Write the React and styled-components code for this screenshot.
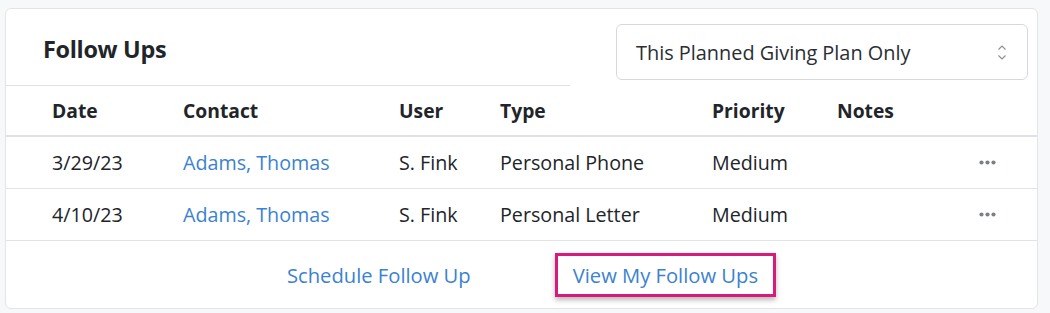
import React from "react";
import styled, { createGlobalStyle } from "styled-components";

const GlobalStyle = createGlobalStyle`
  html, body { margin: 0; padding: 0; }
  body {
    background: #f7f8fa;
    font-family: "Open Sans", "Noto Sans", sans-serif;
    color: #212529;
  }
`;

const Page = styled.div`
  padding: 8px 12px 0 5px;
`;

const Card = styled.div`
  background: #fff;
  border: 1px solid #e1e4e8;
  border-radius: 6px;
  height: 299px;
  overflow: hidden;
  display: flex;
  flex-direction: column;
`;

const TopRow = styled.div`
  display: flex;
  align-items: flex-start;
`;

const TitleCell = styled.div`
  flex: 0 0 564px;
  height: 77px;
  border-bottom: 1px solid #dee2e6;
  display: flex;
  align-items: center;
  padding-left: 37px;
  box-sizing: border-box;
`;

const Title = styled.h5`
  margin: 4px 0 0;
  font-size: 23.4px;
  font-weight: 700;
  letter-spacing: -0.3px;
`;

const SelectWrap = styled.div`
  flex: 1;
  padding: 15px 9px 0 46px;
`;

const SelectBox = styled.div`
  height: 56px;
  box-sizing: border-box;
  border: 1px solid #d5d9dd;
  border-radius: 6px;
  display: flex;
  align-items: center;
  justify-content: space-between;
  padding: 0 20px 0 19px;
  font-size: 19.9px;
  color: #2a2e33;
`;

const Table = styled.table`
  width: 100%;
  border-collapse: collapse;
  table-layout: fixed;
`;

const Th = styled.th`
  text-align: left;
  font-weight: 700;
  font-size: 19.3px;
  height: 49px;
  padding: 0 0 0 ${(p) => p.$pl || 10}px;
  border-bottom: 2px solid #dfe1e4;
  vertical-align: middle;
  line-height: 1;
`;

const Td = styled.td`
  font-size: 19.7px;
  height: 51px;
  padding: 0 0 0 ${(p) => p.$pl || 10}px;
  border-bottom: 1px solid #e1e3e6;
  vertical-align: middle;
  color: ${(p) => (p.$link ? "#3b82d0" : "#212529")};
  white-space: nowrap;
  line-height: 1;
`;

const DotsIcon = styled.svg`
  display: block;
  margin-top: -1px;
`;

const Footer = styled.div`
  flex: 1;
  display: flex;
  align-items: center;
  justify-content: center;
  gap: 66px;
  padding-left: 2px;
`;

const FooterLink = styled.a`
  font-size: 20.2px;
  color: #3b82d0;
  text-decoration: none;
  padding: 6px 15px;
  height: 44px;
  box-sizing: border-box;
  display: flex;
  align-items: center;
  border: ${(p) => (p.$highlight ? "3px solid #d81b7b" : "3px solid transparent")};
  box-shadow: ${(p) => (p.$highlight ? "0 3px 5px rgba(0,0,0,0.28)" : "none")};
`;

const Chevrons = () => (
  <svg width="10" height="17" viewBox="0 0 10 17" fill="none" stroke="#8a8f94" strokeWidth="1.1">
    <path d="M1.5 5.5 L5 2 L8.5 5.5" />
    <path d="M1.5 11.5 L5 15 L8.5 11.5" />
  </svg>
);

const Dots = () => (
  <DotsIcon width="17" height="5" viewBox="0 0 17 5" fill="#7b8085">
    <circle cx="2.5" cy="2.5" r="2.1" />
    <circle cx="8.5" cy="2.5" r="2.1" />
    <circle cx="14.5" cy="2.5" r="2.1" />
  </DotsIcon>
);

const rows = [
  { date: "3/29/23", contact: "Adams, Thomas", user: "S. Fink", type: "Personal Phone", priority: "Medium" },
  { date: "4/10/23", contact: "Adams, Thomas", user: "S. Fink", type: "Personal Letter", priority: "Medium" },
];

export default function App() {
  return (
    <>
      <GlobalStyle />
      <Page>
        <Card>
          <TopRow>
            <TitleCell>
              <Title>Follow Ups</Title>
            </TitleCell>
            <SelectWrap>
              <SelectBox>
                <span>This Planned Giving Plan Only</span>
                <Chevrons />
              </SelectBox>
            </SelectWrap>
          </TopRow>
          <Table>
            <colgroup>
              <col style={{ width: 167 }} />
              <col style={{ width: 216 }} />
              <col style={{ width: 101 }} />
              <col style={{ width: 212 }} />
              <col style={{ width: 125 }} />
              <col style={{ width: 133 }} />
              <col />
            </colgroup>
            <thead>
              <tr>
                <Th $pl={46}>Date</Th>
                <Th>Contact</Th>
                <Th>User</Th>
                <Th>Type</Th>
                <Th>Priority</Th>
                <Th>Notes</Th>
                <Th />
              </tr>
            </thead>
            <tbody>
              {rows.map((r, i) => (
                <tr key={i}>
                  <Td $pl={46}>{r.date}</Td>
                  <Td $link>{r.contact}</Td>
                  <Td>{r.user}</Td>
                  <Td>{r.type}</Td>
                  <Td>{r.priority}</Td>
                  <Td />
                  <Td $pl={19}>
                    <Dots />
                  </Td>
                </tr>
              ))}
            </tbody>
          </Table>
          <Footer>
            <FooterLink href="#">Schedule Follow Up</FooterLink>
            <FooterLink href="#" $highlight>
              View My Follow Ups
            </FooterLink>
          </Footer>
        </Card>
      </Page>
    </>
  );
}
